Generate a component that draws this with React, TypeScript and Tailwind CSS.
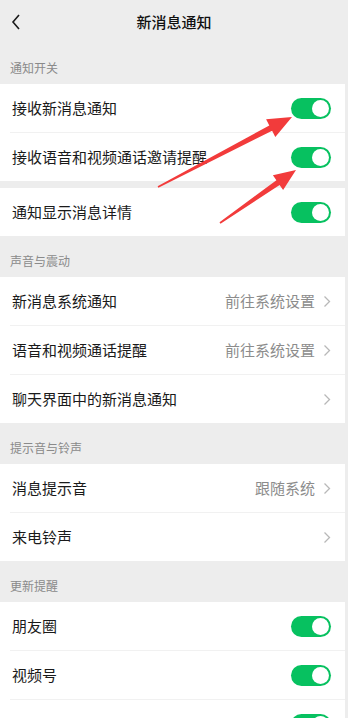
import React from 'react';

type Row = { label: string; value?: string; kind: 'toggle' | 'link' };

function Toggle() {
  return (
    <div className="w-10 h-[21px] rounded-full bg-[#07c160] flex items-center justify-end pr-[2px]">
      <div className="w-[17px] h-[17px] rounded-full bg-white" />
    </div>
  );
}

function Chevron() {
  return (
    <svg width="8" height="13" viewBox="0 0 8 13" fill="none" className="ml-2">
      <polyline points="1.5,1.5 6.5,6.5 1.5,11.5" stroke="#b8b8b8" strokeWidth="1.3" />
    </svg>
  );
}

function SectionHeader({ title, first }: { title: string; first?: boolean }) {
  return (
    <div className={`${first ? 'h-10' : 'h-[41px]'} flex items-end px-[10px] pb-[7px] text-[12px] text-[#8a8a8a]`}>
      {title}
    </div>
  );
}

function Panel({ rows }: { rows: Row[] }) {
  return (
    <div className="bg-white mr-[3px]">
      {rows.map((r, i) => (
        <div key={i}>
          {i > 0 && <div className="ml-[10px] h-px bg-[#f1f1f1]" />}
          <div className="h-12 flex items-center pl-3 pr-[14px]">
            <span className="flex-1 text-[15px] text-[#1a1a1a]">{r.label}</span>
            {r.kind === 'toggle' ? (
              <Toggle />
            ) : (
              <div className="flex items-center text-[15px] text-[#8c8c8c]">
                {r.value}
                <Chevron />
              </div>
            )}
          </div>
        </div>
      ))}
    </div>
  );
}

export default function App() {
  return (
    <div
      className="relative w-full h-[718px] overflow-hidden bg-[#ededed]"
      style={{ fontFamily: '"Noto Sans CJK SC", "Noto Sans", sans-serif' }}
    >
      {/* nav */}
      <div className="h-11 grid grid-cols-[48px_1fr_48px] items-center">
        <svg width="20" height="20" viewBox="0 0 20 20" fill="none" className="ml-2">
          <polyline points="11,3 5,10 11,17" stroke="#1a1a1a" strokeWidth="1.6" />
        </svg>
        <div className="text-center text-[15px] font-medium text-[#111]">新消息通知</div>
        <div />
      </div>

      <SectionHeader title="通知开关" first />
      <Panel
        rows={[
          { label: '接收新消息通知', kind: 'toggle' },
          { label: '接收语音和视频通话邀请提醒', kind: 'toggle' },
        ]}
      />
      <div className="h-[7px]" />
      <Panel rows={[{ label: '通知显示消息详情', kind: 'toggle' }]} />

      <SectionHeader title="声音与震动" />
      <Panel
        rows={[
          { label: '新消息系统通知', value: '前往系统设置', kind: 'link' },
          { label: '语音和视频通话提醒', value: '前往系统设置', kind: 'link' },
          { label: '聊天界面中的新消息通知', kind: 'link' },
        ]}
      />

      <SectionHeader title="提示音与铃声" />
      <Panel
        rows={[
          { label: '消息提示音', value: '跟随系统', kind: 'link' },
          { label: '来电铃声', kind: 'link' },
        ]}
      />

      <SectionHeader title="更新提醒" />
      <Panel
        rows={[
          { label: '朋友圈', kind: 'toggle' },
          { label: '视频号', kind: 'toggle' },
          { label: '', kind: 'toggle' },
        ]}
      />

      {/* red annotation arrows */}
      <svg className="absolute inset-0 pointer-events-none" width="348" height="718" viewBox="0 0 348 718">
        <polygon
          points="157.6,186.3 269.3,125.4 266.1,119.2 292,117 275.3,137 272.1,130.8 158.4,187.7"
          fill="#f23b3b"
        />
        <polygon
          points="219.5,222.3 276.4,180.3 272.9,175.2 296,170 283.1,190 279.6,184.9 220.5,223.7"
          fill="#f23b3b"
        />
      </svg>
    </div>
  );
}
